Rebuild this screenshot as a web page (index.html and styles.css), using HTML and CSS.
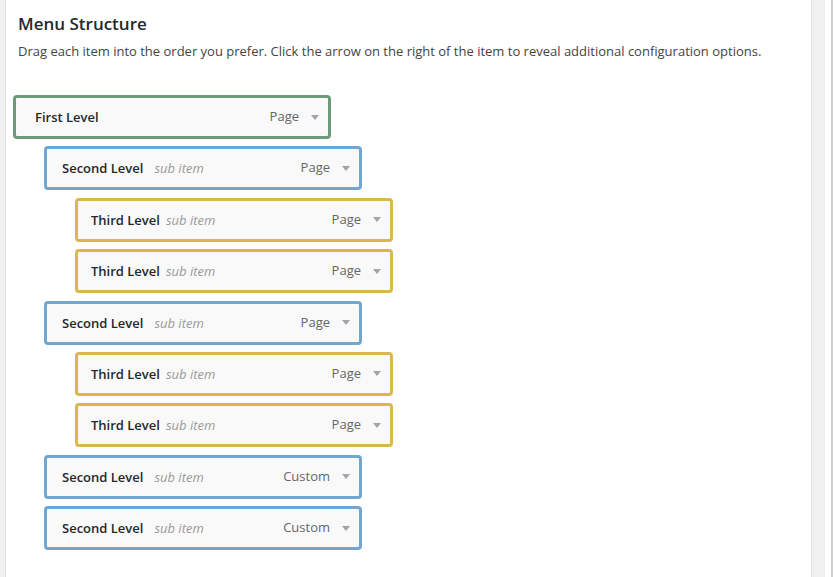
FILE: index.html
```html
<!DOCTYPE html>
<html>
<head>
<meta charset="utf-8">
<link rel="stylesheet" href="styles.css">
</head>
<body>
<div class="page">
  <div class="left-strip"></div>
  <main class="main">
    <h2 class="title">Menu Structure</h2>
    <p class="desc">Drag each item into the order you prefer. Click the arrow on the right of the item to reveal additional configuration options.</p>
    <ul class="menu">
      <li class="item depth-0"><span class="name">First Level</span><span class="type">Page</span><span class="arrow"></span></li>
      <li class="item depth-1"><span class="name">Second Level</span><span class="sub">sub item</span><span class="type">Page</span><span class="arrow"></span></li>
      <li class="item depth-2"><span class="name">Third Level</span><span class="sub">sub item</span><span class="type">Page</span><span class="arrow"></span></li>
      <li class="item depth-2"><span class="name">Third Level</span><span class="sub">sub item</span><span class="type">Page</span><span class="arrow"></span></li>
      <li class="item depth-1"><span class="name">Second Level</span><span class="sub">sub item</span><span class="type">Page</span><span class="arrow"></span></li>
      <li class="item depth-2"><span class="name">Third Level</span><span class="sub">sub item</span><span class="type">Page</span><span class="arrow"></span></li>
      <li class="item depth-2"><span class="name">Third Level</span><span class="sub">sub item</span><span class="type">Page</span><span class="arrow"></span></li>
      <li class="item depth-1"><span class="name">Second Level</span><span class="sub">sub item</span><span class="type">Custom</span><span class="arrow"></span></li>
      <li class="item depth-1"><span class="name">Second Level</span><span class="sub">sub item</span><span class="type">Custom</span><span class="arrow"></span></li>
    </ul>
  </main>
  <div class="right-gutter"></div>
  <div class="right-edge"></div>
</div>
</body>
</html>
```
FILE: styles.css
```css
html, body {
  margin: 0;
  padding: 0;
  background: #fff;
}
body {
  font-family: "Open Sans", "Liberation Sans", sans-serif;
  color: #32373c;
  font-size: 13px;
}
.page {
  display: flex;
  height: 577px;
}
.left-strip {
  width: 5px;
  background: #f1f1f1;
  border-right: 1px solid #e2e2e2;
  flex: none;
}
.main {
  flex: 1;
  padding: 0 0 0 12px;
}
.title {
  margin: 12px 0 0;
  font-size: 17px;
  line-height: 24px;
  font-weight: 600;
  color: #23282d;
}
.desc {
  margin: 6px 0 0;
  font-size: 13px;
  line-height: 18px;
  color: #444;
}
.menu {
  list-style: none;
  margin: 35px 0 0 -5px;
  padding: 0;
}
.item {
  box-sizing: border-box;
  width: 318px;
  height: 44px;
  margin-bottom: 7.4px;
  display: flex;
  align-items: center;
  padding: 0 9px 0 19px;
  background: #f9f9f9;
  border: 3px solid #6b9a78;
  border-radius: 4px;
}
.depth-0 { border-color: #6c9a7b; }
.depth-1 { margin-left: 31px; border-color: #72a6d2; padding-left: 15px; }
.depth-2 { margin-left: 62px; border-color: #dbb84d; padding-left: 13px; }
.name {
  font-weight: 600;
  color: #23282d;
  font-size: 13px;
}
.sub {
  margin-left: 11px;
  font-style: italic;
  color: #999;
  font-size: 13px;
}
.depth-2 .sub { margin-left: 6px; }
.type {
  margin-left: auto;
  color: #666;
  font-size: 13px;
  position: relative;
  top: -1px;
}
.arrow {
  width: 0;
  height: 0;
  margin-left: 12px;
  border-left: 4px solid transparent;
  border-right: 4px solid transparent;
  border-top: 5px solid #a0a5aa;
}
.right-gutter {
  width: 13px;
  flex: none;
  background: #f0f0f0;
  border-left: 1px solid #e0e0e0;
}
.right-edge {
  width: 6px;
  flex: none;
  background: #fff;
  border-right: 2px solid #cfcfcf;
}
```
